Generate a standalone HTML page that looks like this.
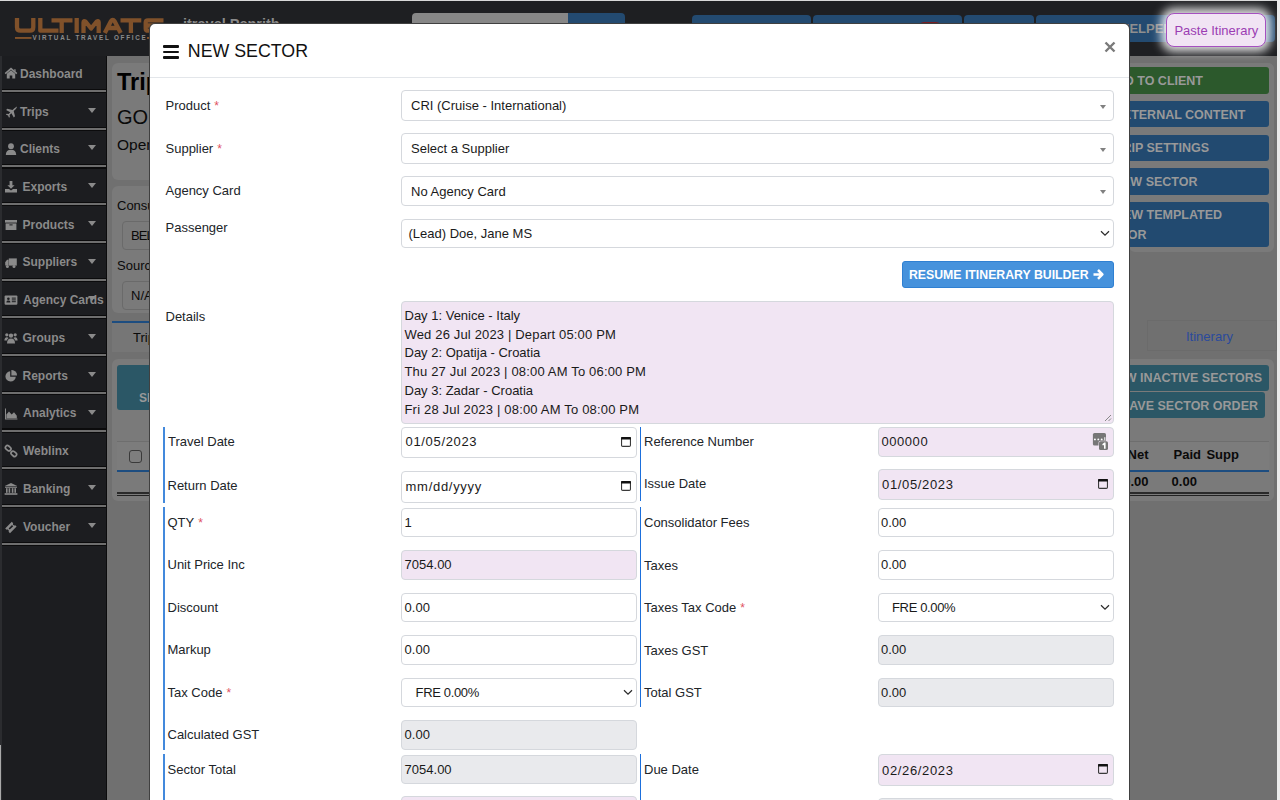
<!DOCTYPE html>
<html><head><meta charset="utf-8"><title>New Sector</title>
<style>
*{box-sizing:border-box;margin:0;padding:0}
html,body{width:1280px;height:800px;overflow:hidden;background:#707070}
body{position:relative;font-family:"Liberation Sans",sans-serif}
.a{position:absolute}
.t{white-space:nowrap;line-height:1}
.fc{border:1px solid #d5d8dd;border-radius:4px}
.rq{color:#e0525f;font-size:12px;margin-left:4px;position:relative;top:0px}
</style></head><body>
<div class="a" style="left:0.00px;top:0.00px;width:1280.00px;height:800.00px;background:#707070"></div>
<div class="a" style="left:1277.00px;top:0.00px;width:3.00px;height:800.00px;background:#ebebeb"></div>
<div class="a" style="left:0.00px;top:0.00px;width:1277.00px;height:56.00px;background:#1e1f22"></div>
<div class="a" style="left:0.00px;top:0.00px;width:1277.00px;height:1.00px;background:#d9d9d9"></div>
<svg class="a" style="left:0;top:0" width="180" height="50" viewBox="0 0 180 50">
<g fill="none" stroke="#80512a" stroke-width="4.3" stroke-linejoin="round">
<path d="M17 18V27.2Q17 30.7 20.5 30.7H29.8Q33.3 30.7 33.3 27.2V18"/>
<path d="M40.3 18V30.7H58.5"/>
<path d="M51.5 20.3H72.5M61.7 20.3V33"/>
<path d="M76.7 18V33"/>
<path d="M83.5 33V22.5Q83.5 20.3 85.5 21.5L91.1 28.5L96.7 21.5Q98.7 20.3 98.7 22.5V33"/>
<path d="M104.8 33L110.9 21.2Q112.75 18.6 114.6 21.2L120.7 33M108.5 28H117"/>
<path d="M120.5 20.3H141.3M130.9 20.3V33"/>
<path d="M163.5 20.3H148Q145.7 20.3 145.7 22.6V28.4Q145.7 30.7 148 30.7H163.5M145.7 25.5H160"/>
</g>
<rect x="15" y="37" width="16.5" height="1.9" fill="#80512a"/>
<rect x="147" y="37" width="20" height="1.9" fill="#80512a"/>
<text x="32.5" y="39.8" font-family="Liberation Sans" font-weight="bold" font-size="6.3" fill="#8c8c8c" textLength="113.3" lengthAdjust="spacing">VIRTUAL TRAVEL OFFICE</text>
</svg>
<div class="a t" style="left:183.00px;top:17.33px;font-size:14.5px;color:#8a8a8a;font-weight:bold;">itravel Penrith</div>
<div class="a" style="left:412.00px;top:13.00px;width:156.00px;height:32.00px;background:#878787;border-radius:4px 0 0 4px"></div>
<div class="a" style="left:568.00px;top:13.00px;width:57.00px;height:32.00px;background:#234a70;border-radius:0 4px 4px 0"></div>
<div class="a" style="left:692.00px;top:15.00px;width:118.50px;height:27.00px;background:#234a70;border-radius:4px"></div>
<div class="a" style="left:812.50px;top:15.00px;width:149.50px;height:27.00px;background:#234a70;border-radius:4px"></div>
<div class="a" style="left:918.00px;top:21.80px;width:24.00px;height:12.20px;background:#7a1d22;border-radius:6px"></div>
<div class="a" style="left:964.00px;top:15.00px;width:70.00px;height:27.00px;background:#234a70;border-radius:4px"></div>
<div class="a" style="left:1036.00px;top:15.00px;width:239.00px;height:27.00px;background:#234a70;border-radius:4px"></div>
<div class="a t" style="left:1120.00px;top:22.00px;font-size:13px;color:#8f8f8f;font-weight:bold;">HELPEN</div>
<div class="a" style="left:1166px;top:13.2px;width:99.6px;height:33.5px;background:#f1e4f4;border:1.5px solid #a550c0;border-radius:8px;box-shadow:0 0 10px 5px rgba(255,255,255,.85)"></div>
<div class="a t" style="left:1174.40px;top:24.00px;font-size:13px;color:#9b3db3;">Paste Itinerary</div>
<div class="a" style="left:0.00px;top:56.00px;width:107.00px;height:744.00px;background:#1c1d20"></div>
<div class="a" style="left:0.00px;top:56.00px;width:2.00px;height:744.00px;background:#2b2c2f"></div>
<div class="a" style="left:106.00px;top:56.00px;width:1.00px;height:744.00px;background:#0c0c0d"></div>
<div class="a" style="left:0.00px;top:745.00px;width:1.30px;height:55.00px;background:#a9a9a9"></div>
<div class="a" style="left:2.00px;top:88.90px;width:104.00px;height:4.20px;background:#0b0b0c"></div>
<div class="a" style="left:2.00px;top:90.00px;width:104.00px;height:2.00px;background:#6e6e6e"></div>
<div class="a t" style="left:20.00px;top:67.84px;font-size:12px;color:#8a8a8a;font-weight:bold;">Dashboard</div>
<svg class="a" style="left:4px;top:67.00px" width="14" height="14" viewBox="0 0 14 14" fill="#8a8a8a"><path d="M1.2 6.6L7 1.6L12.8 6.6" fill="none" stroke="#8a8a8a" stroke-width="1.6"/><path d="M10.2 2.2h1.4v2.6l-1.4-1.2z"/><path d="M2.8 6.8L7 3.2L11.2 6.8V11.6H8.3V8.6H5.7V11.6H2.8z"/></svg>
<div class="a" style="left:2.00px;top:126.63px;width:104.00px;height:4.20px;background:#0b0b0c"></div>
<div class="a" style="left:2.00px;top:127.73px;width:104.00px;height:2.00px;background:#6e6e6e"></div>
<div class="a t" style="left:20.00px;top:105.57px;font-size:12px;color:#8a8a8a;font-weight:bold;">Trips</div>
<svg class="a" style="left:4px;top:104.73px" width="14" height="14" viewBox="0 0 14 14" fill="#8a8a8a"><path d="M12.6 1.4c.6.6-.1 1.9-1 2.8L9.7 6.1l1.3 5.2-1.2 1.2L7.4 8.3 5.6 10.1l.3 1.8-.9.9-1-2.2-2.2-1 .9-.9 1.8.3 1.8-1.8L2.1 5l1.2-1.2 5.2 1.3 1.9-1.9c.9-.9 2.2-1.6 2.2-1.8z"/></svg>
<div class="a" style="left:88px;top:107.73px;width:0;height:0;border-left:4.5px solid transparent;border-right:4.5px solid transparent;border-top:5px solid #8a8a8a"></div>
<div class="a" style="left:2.00px;top:164.36px;width:104.00px;height:4.20px;background:#0b0b0c"></div>
<div class="a" style="left:2.00px;top:165.46px;width:104.00px;height:2.00px;background:#6e6e6e"></div>
<div class="a t" style="left:20.00px;top:143.30px;font-size:12px;color:#8a8a8a;font-weight:bold;">Clients</div>
<svg class="a" style="left:4px;top:142.46px" width="14" height="14" viewBox="0 0 14 14" fill="#8a8a8a"><circle cx="7" cy="4.2" r="2.9"/><path d="M1.8 13c0-3.6 1.8-5.3 5.2-5.3s5.2 1.7 5.2 5.3z"/></svg>
<div class="a" style="left:88px;top:145.46px;width:0;height:0;border-left:4.5px solid transparent;border-right:4.5px solid transparent;border-top:5px solid #8a8a8a"></div>
<div class="a" style="left:2.00px;top:202.09px;width:104.00px;height:4.20px;background:#0b0b0c"></div>
<div class="a" style="left:2.00px;top:203.19px;width:104.00px;height:2.00px;background:#6e6e6e"></div>
<div class="a t" style="left:22.50px;top:181.03px;font-size:12px;color:#8a8a8a;font-weight:bold;">Exports</div>
<svg class="a" style="left:4px;top:180.19px" width="14" height="14" viewBox="0 0 14 14" fill="#8a8a8a"><path d="M5.6 1h2.8v4.2h2.2L7 8.8 3.4 5.2h2.2z"/><path d="M1 9h4l2 1.6L9 9h4v3.6H1z"/></svg>
<div class="a" style="left:88px;top:183.19px;width:0;height:0;border-left:4.5px solid transparent;border-right:4.5px solid transparent;border-top:5px solid #8a8a8a"></div>
<div class="a" style="left:2.00px;top:239.82px;width:104.00px;height:4.20px;background:#0b0b0c"></div>
<div class="a" style="left:2.00px;top:240.92px;width:104.00px;height:2.00px;background:#6e6e6e"></div>
<div class="a t" style="left:22.50px;top:218.76px;font-size:12px;color:#8a8a8a;font-weight:bold;">Products</div>
<svg class="a" style="left:4px;top:217.92px" width="14" height="14" viewBox="0 0 14 14" fill="#8a8a8a"><rect x="1" y="2" width="12" height="2.6"/><path d="M1.6 5.4h10.8V12H1.6z"/><rect x="5.4" y="6.4" width="3.2" height="1" fill="#1c1d20"/></svg>
<div class="a" style="left:88px;top:220.92px;width:0;height:0;border-left:4.5px solid transparent;border-right:4.5px solid transparent;border-top:5px solid #8a8a8a"></div>
<div class="a" style="left:2.00px;top:277.55px;width:104.00px;height:4.20px;background:#0b0b0c"></div>
<div class="a" style="left:2.00px;top:278.65px;width:104.00px;height:2.00px;background:#6e6e6e"></div>
<div class="a t" style="left:22.50px;top:256.49px;font-size:12px;color:#8a8a8a;font-weight:bold;">Suppliers</div>
<svg class="a" style="left:4px;top:255.65px" width="14" height="14" viewBox="0 0 14 14" fill="#8a8a8a"><path d="M4.8 2.4h8v7.2h-8z"/><path d="M1.2 6.2L3 3.8h1.6v5.8H1.2z"/><circle cx="3.4" cy="10.6" r="1.5"/><circle cx="10" cy="10.6" r="1.5"/></svg>
<div class="a" style="left:88px;top:258.65px;width:0;height:0;border-left:4.5px solid transparent;border-right:4.5px solid transparent;border-top:5px solid #8a8a8a"></div>
<div class="a" style="left:2.00px;top:315.28px;width:104.00px;height:4.20px;background:#0b0b0c"></div>
<div class="a" style="left:2.00px;top:316.38px;width:104.00px;height:2.00px;background:#6e6e6e"></div>
<div class="a t" style="left:23.00px;top:294.22px;font-size:12px;color:#8a8a8a;font-weight:bold;">Agency Cards</div>
<svg class="a" style="left:4px;top:293.38px" width="14" height="14" viewBox="0 0 14 14" fill="#8a8a8a"><rect x="0.6" y="2.4" width="12.8" height="9.4" rx="1"/><circle cx="4.4" cy="5.8" r="1.3" fill="#1c1d20"/><path d="M2.4 9.4c0-1.4.8-2 2-2s2 .6 2 2z" fill="#1c1d20"/><rect x="7.8" y="4.6" width="4" height="1" fill="#1c1d20"/><rect x="7.8" y="6.4" width="4" height="1" fill="#1c1d20"/><rect x="7.8" y="8.2" width="4" height="1" fill="#1c1d20"/></svg>
<div class="a" style="left:88px;top:296.38px;width:0;height:0;border-left:4.5px solid transparent;border-right:4.5px solid transparent;border-top:5px solid #8a8a8a"></div>
<div class="a" style="left:2.00px;top:353.01px;width:104.00px;height:4.20px;background:#0b0b0c"></div>
<div class="a" style="left:2.00px;top:354.11px;width:104.00px;height:2.00px;background:#6e6e6e"></div>
<div class="a t" style="left:22.50px;top:331.95px;font-size:12px;color:#8a8a8a;font-weight:bold;">Groups</div>
<svg class="a" style="left:4px;top:331.11px" width="14" height="14" viewBox="0 0 14 14" fill="#8a8a8a"><circle cx="7" cy="4.6" r="2.2"/><circle cx="2.8" cy="3.8" r="1.6"/><circle cx="11.2" cy="3.8" r="1.6"/><path d="M3 12.4c0-3 1.4-4.8 4-4.8s4 1.8 4 4.8z"/><path d="M0.4 9.6c0-2 .8-3.4 2.4-3.4.9 0 1.4.3 1.8.7-1 .8-1.6 1.7-1.8 2.7z"/><path d="M13.6 9.6c0-2-.8-3.4-2.4-3.4-.9 0-1.4.3-1.8.7 1 .8 1.6 1.7 1.8 2.7z"/></svg>
<div class="a" style="left:88px;top:334.11px;width:0;height:0;border-left:4.5px solid transparent;border-right:4.5px solid transparent;border-top:5px solid #8a8a8a"></div>
<div class="a" style="left:2.00px;top:390.74px;width:104.00px;height:4.20px;background:#0b0b0c"></div>
<div class="a" style="left:2.00px;top:391.84px;width:104.00px;height:2.00px;background:#6e6e6e"></div>
<div class="a t" style="left:22.50px;top:369.68px;font-size:12px;color:#8a8a8a;font-weight:bold;">Reports</div>
<svg class="a" style="left:4px;top:368.84px" width="14" height="14" viewBox="0 0 14 14" fill="#8a8a8a"><path d="M6.2 2.2A5.2 5.2 0 1 0 11.8 7.8H6.2z"/><path d="M7.4 1A5.2 5.2 0 0 1 13 6.6H7.4z"/></svg>
<div class="a" style="left:88px;top:371.84px;width:0;height:0;border-left:4.5px solid transparent;border-right:4.5px solid transparent;border-top:5px solid #8a8a8a"></div>
<div class="a" style="left:2.00px;top:428.47px;width:104.00px;height:4.20px;background:#0b0b0c"></div>
<div class="a" style="left:2.00px;top:429.57px;width:104.00px;height:2.00px;background:#6e6e6e"></div>
<div class="a t" style="left:23.00px;top:407.41px;font-size:12px;color:#8a8a8a;font-weight:bold;">Analytics</div>
<svg class="a" style="left:4px;top:406.57px" width="14" height="14" viewBox="0 0 14 14" fill="#8a8a8a"><path d="M1 1.6v11h12.4v-1H2V1.6z"/><path d="M2.4 11.2V7.6L5 4.6 7.6 7.4 10 5.2 12.8 8.8v2.4z"/></svg>
<div class="a" style="left:88px;top:409.57px;width:0;height:0;border-left:4.5px solid transparent;border-right:4.5px solid transparent;border-top:5px solid #8a8a8a"></div>
<div class="a" style="left:2.00px;top:466.20px;width:104.00px;height:4.20px;background:#0b0b0c"></div>
<div class="a" style="left:2.00px;top:467.30px;width:104.00px;height:2.00px;background:#6e6e6e"></div>
<div class="a t" style="left:23.00px;top:445.14px;font-size:12px;color:#8a8a8a;font-weight:bold;">Weblinx</div>
<svg class="a" style="left:4px;top:444.30px" width="14" height="14" viewBox="0 0 14 14" fill="#8a8a8a"><rect x="1.2" y="2.2" width="6" height="4" rx="2" transform="rotate(40 4.2 4.2)" fill="none" stroke="#8a8a8a" stroke-width="1.7"/><rect x="6.8" y="7.8" width="6" height="4" rx="2" transform="rotate(40 9.8 9.8)" fill="none" stroke="#8a8a8a" stroke-width="1.7"/></svg>
<div class="a" style="left:2.00px;top:503.93px;width:104.00px;height:4.20px;background:#0b0b0c"></div>
<div class="a" style="left:2.00px;top:505.03px;width:104.00px;height:2.00px;background:#6e6e6e"></div>
<div class="a t" style="left:23.00px;top:482.87px;font-size:12px;color:#8a8a8a;font-weight:bold;">Banking</div>
<svg class="a" style="left:4px;top:482.03px" width="14" height="14" viewBox="0 0 14 14" fill="#8a8a8a"><path d="M7 1L13.2 4H0.8z"/><rect x="1" y="4.6" width="12" height="1.2"/><rect x="2" y="6.2" width="1.6" height="4.6"/><rect x="4.6" y="6.2" width="1.6" height="4.6"/><rect x="7.8" y="6.2" width="1.6" height="4.6"/><rect x="10.4" y="6.2" width="1.6" height="4.6"/><rect x="0.6" y="11.2" width="12.8" height="1.6"/></svg>
<div class="a" style="left:88px;top:485.03px;width:0;height:0;border-left:4.5px solid transparent;border-right:4.5px solid transparent;border-top:5px solid #8a8a8a"></div>
<div class="a" style="left:2.00px;top:541.66px;width:104.00px;height:4.20px;background:#0b0b0c"></div>
<div class="a" style="left:2.00px;top:542.76px;width:104.00px;height:2.00px;background:#6e6e6e"></div>
<div class="a t" style="left:23.00px;top:520.60px;font-size:12px;color:#8a8a8a;font-weight:bold;">Voucher</div>
<svg class="a" style="left:4px;top:519.76px" width="14" height="14" viewBox="0 0 14 14" fill="#8a8a8a"><path d="M1.2 8.4L7.8 1.8l1.4 1.4c-.4.6-.3 1.3.2 1.8s1.2.6 1.8.2l1.4 1.4-6.6 6.6-1.4-1.4c.4-.6.3-1.3-.2-1.8s-1.2-.6-1.8-.2z"/><path d="M4.6 8.4L8 5l1.2 1.2L5.8 9.6z" fill="#1c1d20"/></svg>
<div class="a" style="left:88px;top:522.76px;width:0;height:0;border-left:4.5px solid transparent;border-right:4.5px solid transparent;border-top:5px solid #8a8a8a"></div>
<div class="a" style="left:111.50px;top:62.50px;width:1162.00px;height:117.00px;background:#7a7a7a;border-radius:6px"></div>
<div class="a t" style="left:117.00px;top:70.91px;font-size:23.5px;color:#000;font-weight:bold;">Trip</div>
<div class="a t" style="left:117.00px;top:107.07px;font-size:20px;color:#0a0a0a;">GO</div>
<div class="a t" style="left:117.00px;top:137.38px;font-size:15.5px;color:#0a0a0a;">Open</div>
<div class="a" style="left:1129.00px;top:62.50px;width:144.50px;height:189.50px;background:#7a7a7a;border-radius:6px"></div>
<div class="a" style="left:1100.00px;top:67.00px;width:169.00px;height:27.00px;background:#2c592c;border-radius:3px"></div>
<div class="a t" style="right:77.00px;top:75.42px;font-size:12.5px;color:#999;font-weight:bold;">ADD TO CLIENT</div>
<div class="a" style="left:1100.00px;top:100.60px;width:169.00px;height:26.90px;background:#224a70;border-radius:3px"></div>
<div class="a t" style="right:34.50px;top:109.22px;font-size:12.5px;color:#999;font-weight:bold;">EXTERNAL CONTENT</div>
<div class="a" style="left:1100.00px;top:134.50px;width:169.00px;height:26.50px;background:#224a70;border-radius:3px"></div>
<div class="a t" style="right:71.00px;top:141.92px;font-size:12.5px;color:#999;font-weight:bold;">TRIP SETTINGS</div>
<div class="a" style="left:1100.00px;top:168.20px;width:169.00px;height:26.50px;background:#224a70;border-radius:3px"></div>
<div class="a t" style="right:82.50px;top:176.02px;font-size:12.5px;color:#999;font-weight:bold;">NEW SECTOR</div>
<div class="a" style="left:1100.00px;top:201.80px;width:169.00px;height:45.40px;background:#224a70;border-radius:3px"></div>
<div class="a t" style="right:58.00px;top:209.42px;font-size:12.5px;color:#999;font-weight:bold;">NEW TEMPLATED</div>
<div class="a t" style="right:133.50px;top:228.72px;font-size:12.5px;color:#999;font-weight:bold;">SECTOR</div>
<div class="a" style="left:111.50px;top:186.00px;width:988.50px;height:127.00px;background:#7a7a7a;border-radius:6px"></div>
<div class="a t" style="left:117.00px;top:198.60px;font-size:13px;color:#0a0a0a;">Consultant</div>
<div class="a" style="left:121.50px;top:221.00px;width:278.50px;height:29.00px;background:#7a7a7a;border:1px solid #6a6a6a;border-radius:4px"></div>
<div class="a t" style="left:131.00px;top:229.00px;font-size:13px;letter-spacing:-0.9px;color:#0a0a0a;">BELINDA</div>
<div class="a t" style="left:117.00px;top:259.00px;font-size:13px;color:#0a0a0a;">Source</div>
<div class="a" style="left:121.50px;top:281.00px;width:278.50px;height:29.00px;background:#7a7a7a;border:1px solid #6a6a6a;border-radius:4px"></div>
<div class="a t" style="left:131.00px;top:289.00px;font-size:13px;color:#0a0a0a;">N/A</div>
<div class="a" style="left:112.00px;top:321.00px;width:888.00px;height:2.00px;background:#1d4d80"></div>
<div class="a" style="left:112.00px;top:323.00px;width:888.00px;height:29.00px;background:#767676"></div>
<div class="a" style="left:1146.50px;top:320.00px;width:130.50px;height:31.00px;border:1px solid rgba(0,0,0,.04)"></div>
<div class="a t" style="left:133.00px;top:330.60px;font-size:13px;color:#0a0a0a;">Trip</div>
<div class="a t" style="left:1186.00px;top:330.40px;font-size:13px;color:#2a4a9c;">Itinerary</div>
<div class="a" style="left:111.50px;top:359.00px;width:1162.00px;height:142.00px;background:#7a7a7a;border-radius:6px"></div>
<div class="a" style="left:117.00px;top:365.00px;width:283.00px;height:45.00px;background:#2b5766;border-radius:3px"></div>
<div class="a t" style="left:139.00px;top:391.84px;font-size:12px;color:#999;font-weight:bold;">SELECT</div>
<div class="a" style="left:1100.00px;top:365.00px;width:169.00px;height:26.00px;background:#2b5766;border-radius:3px"></div>
<div class="a t" style="right:18.00px;top:372.02px;font-size:12.5px;color:#999;font-weight:bold;">SHOW INACTIVE SECTORS</div>
<div class="a" style="left:1100.00px;top:392.00px;width:164.60px;height:26.00px;background:#2b5766;border-radius:3px"></div>
<div class="a t" style="right:22.00px;top:399.62px;font-size:12.5px;color:#999;font-weight:bold;">SAVE SECTOR ORDER</div>
<div class="a" style="left:117.00px;top:440.50px;width:1152.00px;height:1.00px;background:#6e6e6e"></div>
<div class="a" style="left:117.00px;top:441.50px;width:1152.00px;height:28.00px;background:#7c7c7c"></div>
<div class="a" style="left:129.00px;top:449.50px;width:13.00px;height:13.00px;border:1.2px solid #3a3a3a;border-radius:3px;background:#7e7e7e"></div>
<div class="a" style="left:117.00px;top:469.50px;width:1152.00px;height:2.00px;background:#1d4d80"></div>
<div class="a t" style="right:131.50px;top:448.30px;font-size:13px;color:#0a0a0a;font-weight:bold;">Net</div>
<div class="a t" style="left:1173.60px;top:448.30px;font-size:13px;color:#0a0a0a;font-weight:bold;">Paid</div>
<div class="a t" style="left:1206.40px;top:448.30px;font-size:13px;color:#0a0a0a;font-weight:bold;">Supp</div>
<div class="a t" style="right:131.50px;top:475.30px;font-size:13px;color:#0a0a0a;font-weight:bold;">0.00</div>
<div class="a t" style="left:1171.60px;top:475.30px;font-size:13px;color:#0a0a0a;font-weight:bold;">0.00</div>
<div class="a" style="left:117.00px;top:491.90px;width:1152.00px;height:2.00px;background:#2a2a2a"></div>
<div class="a" style="left:117.00px;top:495.20px;width:1152.00px;height:1.30px;background:#222"></div>
<div class="a" style="left:149px;top:22.5px;width:981px;height:800px;border:1px solid rgba(0,0,0,.75);border-radius:6px;background:#fff"></div>
<div class="a" style="left:162.80px;top:45.00px;width:16.60px;height:2.50px;background:#111;border-radius:1px"></div>
<div class="a" style="left:162.80px;top:50.50px;width:16.60px;height:2.50px;background:#111;border-radius:1px"></div>
<div class="a" style="left:162.80px;top:56.00px;width:16.60px;height:2.50px;background:#111;border-radius:1px"></div>
<div class="a t" style="left:187.80px;top:42.53px;font-size:17.8px;color:#111;">NEW SECTOR</div>
<svg class="a" style="left:1104px;top:41px" width="12" height="12" viewBox="0 0 12 12"><path d="M1.5 1.5L10.5 10.5M10.5 1.5L1.5 10.5" stroke="#7a7a7a" stroke-width="2.4" stroke-linecap="butt"/></svg>
<div class="a" style="left:150.00px;top:77.00px;width:979.00px;height:1.00px;background:#e3e6ea"></div>
<div class="a t" style="left:165.50px;top:98.70px;font-size:13px;color:#212529">Product<span class="rq">*</span></div>
<div class="a fc" style="left:401.00px;top:90.00px;width:713.00px;height:31.00px;background:#fff"></div>
<div class="a t" style="left:411.00px;top:99.00px;font-size:13px;color:#1a1a1a;">CRI (Cruise - International)</div>
<div class="a" style="left:1099.60px;top:104.60px;width:0;height:0;border-left:3.7px solid transparent;border-right:3.7px solid transparent;border-top:4.4px solid #808080"></div>
<div class="a t" style="left:165.50px;top:141.80px;font-size:13px;color:#212529">Supplier<span class="rq">*</span></div>
<div class="a fc" style="left:401.00px;top:133.00px;width:713.00px;height:31.00px;background:#fff"></div>
<div class="a t" style="left:411.00px;top:142.00px;font-size:13px;color:#1a1a1a;">Select a Supplier</div>
<div class="a" style="left:1099.60px;top:147.60px;width:0;height:0;border-left:3.7px solid transparent;border-right:3.7px solid transparent;border-top:4.4px solid #808080"></div>
<div class="a t" style="left:165.50px;top:184.00px;font-size:13px;color:#212529">Agency Card</div>
<div class="a fc" style="left:401.00px;top:176.00px;width:713.00px;height:30.00px;background:#fff"></div>
<div class="a t" style="left:411.00px;top:184.50px;font-size:13px;color:#1a1a1a;">No Agency Card</div>
<div class="a" style="left:1099.60px;top:190.10px;width:0;height:0;border-left:3.7px solid transparent;border-right:3.7px solid transparent;border-top:4.4px solid #808080"></div>
<div class="a t" style="left:165.50px;top:221.00px;font-size:13px;color:#212529">Passenger</div>
<div class="a fc" style="left:401.00px;top:218.50px;width:713.00px;height:29.50px;background:#fff"></div>
<div class="a t" style="left:408.50px;top:226.50px;font-size:13px;color:#1a1a1a;">(Lead) Doe, Jane MS</div>
<svg class="a" style="left:1100.00px;top:229.85px" width="10" height="7" viewBox="0 0 10 7"><path d="M1 1.2L5 5.1L9 1.2" fill="none" stroke="#2a2a2a" stroke-width="1.2"/></svg>
<div class="a" style="left:901.7px;top:261px;width:212.3px;height:26.8px;background:#4692dc;border:1px solid #2f80d2;border-radius:3px"></div>
<div class="a t" style="left:908.90px;top:268.99px;font-size:12.3px;color:#fff;font-weight:bold;">RESUME ITINERARY BUILDER</div>
<svg class="a" style="left:1092.3px;top:268.3px" width="13" height="13" viewBox="0 0 13 13"><path d="M1.5 6.4H10.2M6 2L10.4 6.4L6 10.8" fill="none" stroke="#fff" stroke-width="2.5" stroke-linejoin="round"/></svg>
<div class="a t" style="left:165.50px;top:309.50px;font-size:13px;color:#212529">Details</div>
<div class="a fc" style="left:401px;top:301px;width:713px;height:123px;background:#f1e5f3"></div>
<div class="a t" style="left:404.50px;top:308.90px;font-size:13px;color:#1a1a1a;">Day 1: Venice - Italy</div>
<div class="a t" style="left:404.50px;top:327.68px;font-size:13px;letter-spacing:0.16px;color:#1a1a1a;">Wed 26 Jul 2023 | Depart 05:00 PM</div>
<div class="a t" style="left:404.50px;top:346.46px;font-size:13px;color:#1a1a1a;">Day 2: Opatija - Croatia</div>
<div class="a t" style="left:404.50px;top:365.24px;font-size:13px;letter-spacing:0.17px;color:#1a1a1a;">Thu 27 Jul 2023 | 08:00 AM To 06:00 PM</div>
<div class="a t" style="left:404.50px;top:384.02px;font-size:13px;color:#1a1a1a;">Day 3: Zadar - Croatia</div>
<div class="a t" style="left:404.50px;top:402.80px;font-size:13px;letter-spacing:0.18px;color:#1a1a1a;">Fri 28 Jul 2023 | 08:00 AM To 08:00 PM</div>
<div class="a" style="left:402px;top:422px;width:300px;height:1.6px;overflow:hidden;opacity:.35"><div class="t" style="position:absolute;left:2.5px;top:0px;font-size:13px;color:#1a1a1a">Day 4: Hvar - Croatia</div></div>
<svg class="a" style="left:1103px;top:413px" width="9" height="9" viewBox="0 0 9 9"><path d="M8 2L2 8M8 5.5L5.5 8" stroke="#888" stroke-width="1"/></svg>
<div class="a" style="left:163.00px;top:426.50px;width:2.00px;height:76.00px;background:#4389dc"></div>
<div class="a" style="left:163.00px;top:507.00px;width:2.00px;height:242.60px;background:#4389dc"></div>
<div class="a" style="left:163.00px;top:754.00px;width:2.00px;height:46.00px;background:#4389dc"></div>
<div class="a" style="left:639.70px;top:427.00px;width:1.60px;height:73.60px;background:#1b6fdc"></div>
<div class="a" style="left:639.70px;top:507.00px;width:1.60px;height:199.50px;background:#1b6fdc"></div>
<div class="a" style="left:639.70px;top:753.80px;width:1.60px;height:46.20px;background:#1b6fdc"></div>
<div class="a t" style="left:168.00px;top:434.60px;font-size:13px;color:#212529">Travel Date</div>
<div class="a fc" style="left:401.20px;top:427.00px;width:236.00px;height:30.80px;background:#fff"></div>
<div class="a t" style="left:405.60px;top:435.00px;font-size:13px;letter-spacing:0.65px;color:#1a1a1a;">01/05/2023</div>
<svg class="a" style="left:621.00px;top:435.60px" width="10" height="11" viewBox="0 0 10 11"><rect x="0.55" y="1.6" width="8.9" height="8.8" rx="1.1" fill="none" stroke="#3a3a3a" stroke-width="1.1"/><rect x="0.1" y="0.9" width="9.8" height="2.6" rx="0.6" fill="#111"/></svg>
<div class="a t" style="left:167.50px;top:479.00px;font-size:13px;color:#212529">Return Date</div>
<div class="a fc" style="left:401.20px;top:471.00px;width:236.00px;height:31.50px;background:#fff"></div>
<div class="a t" style="left:405.60px;top:480.00px;font-size:13px;letter-spacing:0.7px;color:#1a1a1a;">mm/dd/yyyy</div>
<svg class="a" style="left:621.00px;top:479.95px" width="10" height="11" viewBox="0 0 10 11"><rect x="0.55" y="1.6" width="8.9" height="8.8" rx="1.1" fill="none" stroke="#3a3a3a" stroke-width="1.1"/><rect x="0.1" y="0.9" width="9.8" height="2.6" rx="0.6" fill="#111"/></svg>
<div class="a t" style="left:167.50px;top:515.70px;font-size:13px;color:#212529">QTY<span class="rq">*</span></div>
<div class="a fc" style="left:401.20px;top:507.50px;width:236.00px;height:29.60px;background:#fff"></div>
<div class="a t" style="left:404.60px;top:515.80px;font-size:13px;color:#1a1a1a;">1</div>
<div class="a t" style="left:167.50px;top:558.20px;font-size:13px;color:#212529">Unit Price Inc</div>
<div class="a fc" style="left:401.20px;top:550.00px;width:236.00px;height:29.60px;background:#f1e5f3"></div>
<div class="a t" style="left:404.60px;top:558.30px;font-size:13px;color:#1a1a1a;">7054.00</div>
<div class="a t" style="left:167.50px;top:600.70px;font-size:13px;color:#212529">Discount</div>
<div class="a fc" style="left:401.20px;top:592.50px;width:236.00px;height:29.60px;background:#fff"></div>
<div class="a t" style="left:404.60px;top:600.80px;font-size:13px;color:#1a1a1a;">0.00</div>
<div class="a t" style="left:167.50px;top:643.20px;font-size:13px;color:#212529">Markup</div>
<div class="a fc" style="left:401.20px;top:635.00px;width:236.00px;height:29.60px;background:#fff"></div>
<div class="a t" style="left:404.60px;top:643.30px;font-size:13px;color:#1a1a1a;">0.00</div>
<div class="a t" style="left:167.50px;top:685.70px;font-size:13px;color:#212529">Tax Code<span class="rq">*</span></div>
<div class="a fc" style="left:401.20px;top:677.50px;width:236.00px;height:29.60px;background:#fff"></div>
<div class="a t" style="left:415.60px;top:685.80px;font-size:13px;letter-spacing:-0.35px;color:#1a1a1a;">FRE 0.00%</div>
<svg class="a" style="left:623.20px;top:688.90px" width="10" height="7" viewBox="0 0 10 7"><path d="M1 1.2L5 5.1L9 1.2" fill="none" stroke="#2a2a2a" stroke-width="1.2"/></svg>
<div class="a t" style="left:167.50px;top:728.20px;font-size:13px;color:#212529">Calculated GST</div>
<div class="a fc" style="left:401.20px;top:720.00px;width:236.00px;height:29.60px;background:#e9eaed"></div>
<div class="a t" style="left:404.60px;top:728.30px;font-size:13px;color:#1a1a1a;">0.00</div>
<div class="a t" style="left:167.50px;top:762.70px;font-size:13px;color:#212529">Sector Total</div>
<div class="a fc" style="left:401.20px;top:754.50px;width:236.00px;height:29.60px;background:#e9eaed"></div>
<div class="a t" style="left:404.60px;top:762.80px;font-size:13px;color:#1a1a1a;">7054.00</div>
<div class="a fc" style="left:401.20px;top:796.20px;width:236.00px;height:33.80px;background:#f1e5f3"></div>
<div class="a t" style="left:644.00px;top:434.60px;font-size:13px;color:#212529">Reference Number</div>
<div class="a fc" style="left:878.30px;top:427.00px;width:235.70px;height:29.50px;background:#f1e5f3"></div>
<div class="a t" style="left:881.50px;top:434.80px;font-size:13px;letter-spacing:0.55px;color:#1a1a1a;">000000</div>
<svg class="a" style="left:1092px;top:432px" width="18" height="19" viewBox="0 0 18 19"><rect x="0.9" y="0.9" width="13.1" height="12.7" rx="1.6" fill="#777"/><circle cx="2.9" cy="7.4" r="0.95" fill="#fff"/><circle cx="6.3" cy="7.4" r="0.95" fill="#fff"/><circle cx="9.7" cy="7.4" r="0.95" fill="#fff"/><rect x="12.3" y="5.2" width="1" height="3.2" fill="#fff"/><rect x="6.5" y="8.7" width="10" height="9.8" rx="2" fill="#f1e5f3"/><rect x="7" y="9.2" width="9" height="8.8" rx="1.6" fill="#777"/><path d="M10.2 12.2L12.3 10.6H13.6V16.8H12V12.9L10.9 13.6z" fill="#fff"/></svg>
<div class="a t" style="left:644.00px;top:477.00px;font-size:13px;color:#212529">Issue Date</div>
<div class="a fc" style="left:878.30px;top:469.40px;width:235.70px;height:30.80px;background:#f1e5f3"></div>
<div class="a t" style="left:882.00px;top:478.00px;font-size:13px;letter-spacing:0.65px;color:#1a1a1a;">01/05/2023</div>
<svg class="a" style="left:1097.80px;top:478.00px" width="10" height="11" viewBox="0 0 10 11"><rect x="0.55" y="1.6" width="8.9" height="8.8" rx="1.1" fill="none" stroke="#3a3a3a" stroke-width="1.1"/><rect x="0.1" y="0.9" width="9.8" height="2.6" rx="0.6" fill="#111"/></svg>
<div class="a t" style="left:644.00px;top:516.00px;font-size:13px;color:#212529">Consolidator Fees</div>
<div class="a fc" style="left:878.30px;top:507.50px;width:235.70px;height:29.60px;background:#fff"></div>
<div class="a t" style="left:881.00px;top:515.80px;font-size:13px;color:#1a1a1a;">0.00</div>
<div class="a t" style="left:644.00px;top:558.50px;font-size:13px;color:#212529">Taxes</div>
<div class="a fc" style="left:878.30px;top:550.00px;width:235.70px;height:29.60px;background:#fff"></div>
<div class="a t" style="left:881.00px;top:558.30px;font-size:13px;color:#1a1a1a;">0.00</div>
<div class="a t" style="left:644.00px;top:601.00px;font-size:13px;color:#212529">Taxes Tax Code<span class="rq">*</span></div>
<div class="a fc" style="left:878.30px;top:592.50px;width:235.70px;height:29.60px;background:#fff"></div>
<div class="a t" style="left:892.00px;top:600.80px;font-size:13px;letter-spacing:-0.35px;color:#1a1a1a;">FRE 0.00%</div>
<svg class="a" style="left:1100.00px;top:603.90px" width="10" height="7" viewBox="0 0 10 7"><path d="M1 1.2L5 5.1L9 1.2" fill="none" stroke="#2a2a2a" stroke-width="1.2"/></svg>
<div class="a t" style="left:644.00px;top:643.50px;font-size:13px;color:#212529">Taxes GST</div>
<div class="a fc" style="left:878.30px;top:635.00px;width:235.70px;height:29.60px;background:#e9eaed"></div>
<div class="a t" style="left:881.00px;top:643.30px;font-size:13px;color:#1a1a1a;">0.00</div>
<div class="a t" style="left:644.00px;top:686.00px;font-size:13px;color:#212529">Total GST</div>
<div class="a fc" style="left:878.30px;top:677.50px;width:235.70px;height:29.60px;background:#e9eaed"></div>
<div class="a t" style="left:881.00px;top:685.80px;font-size:13px;color:#1a1a1a;">0.00</div>
<div class="a t" style="left:644.00px;top:763.20px;font-size:13px;color:#212529">Due Date</div>
<div class="a fc" style="left:878.30px;top:754.00px;width:235.70px;height:31.70px;background:#f1e5f3"></div>
<div class="a t" style="left:882.00px;top:764.00px;font-size:13px;letter-spacing:0.65px;color:#1a1a1a;">02/26/2023</div>
<svg class="a" style="left:1097.80px;top:763.05px" width="10" height="11" viewBox="0 0 10 11"><rect x="0.55" y="1.6" width="8.9" height="8.8" rx="1.1" fill="none" stroke="#3a3a3a" stroke-width="1.1"/><rect x="0.1" y="0.9" width="9.8" height="2.6" rx="0.6" fill="#111"/></svg>
<div class="a fc" style="left:878.30px;top:798.00px;width:235.70px;height:32.00px;background:#e9eaed"></div>
</body></html>
